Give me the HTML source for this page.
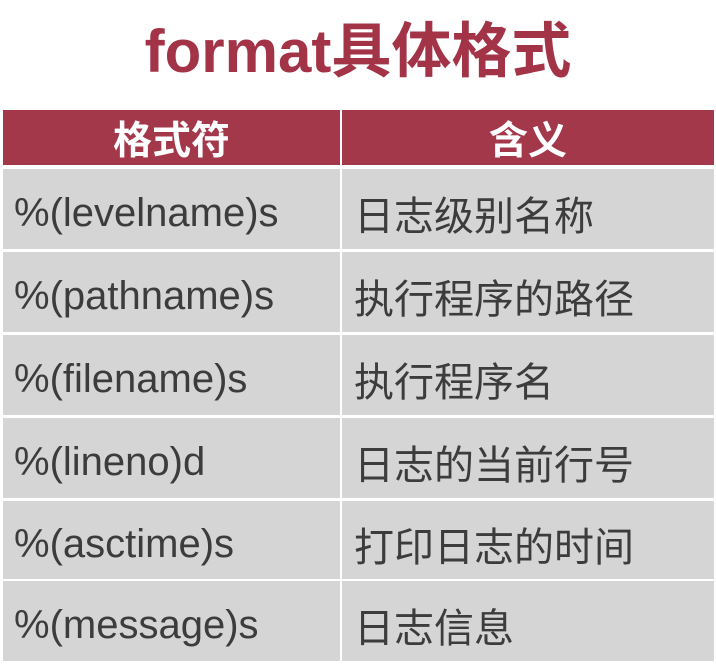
<!DOCTYPE html>
<html><head><meta charset="utf-8"><style>
body{margin:0;width:716px;height:666px;background:#fff;overflow:hidden;font-family:"Liberation Sans","Noto Sans CJK SC",sans-serif;}
.t{position:absolute;left:0;width:716px;top:14px;text-align:center;font-size:60px;font-weight:bold;color:#a33448;line-height:76px;letter-spacing:0px;}
.r{position:absolute;left:3px;width:711px;}
.c{position:absolute;top:0;bottom:0;display:flex;align-items:center;box-sizing:border-box;}
.a{left:0;width:337px;}
.b{left:339px;width:372px;}
.h .c{background:#a3384a;color:#fff;font-weight:bold;font-size:39px;justify-content:center;}
.d .c{background:#d5d5d5;color:#3c3c3c;font-size:40px;padding-left:11px;padding-top:8px;}
.d .b{padding-left:12px;font-size:40px;}
</style></head><body>
<div class="t">format具体格式</div>
<div class="r h" style="top:110px;height:55px"><div class="c a">格式符</div><div class="c b">含义</div></div>
<div class="r d" style="top:169px;height:80px"><div class="c a">%(levelname)s</div><div class="c b">日志级别名称</div></div>
<div class="r d" style="top:252px;height:80px"><div class="c a">%(pathname)s</div><div class="c b">执行程序的路径</div></div>
<div class="r d" style="top:335px;height:80px"><div class="c a">%(filename)s</div><div class="c b">执行程序名</div></div>
<div class="r d" style="top:418px;height:80px"><div class="c a">%(lineno)d</div><div class="c b">日志的当前行号</div></div>
<div class="r d" style="top:501px;height:78px"><div class="c a">%(asctime)s</div><div class="c b">打印日志的时间</div></div>
<div class="r d" style="top:581px;height:80px"><div class="c a">%(message)s</div><div class="c b">日志信息</div></div>
</body></html>
